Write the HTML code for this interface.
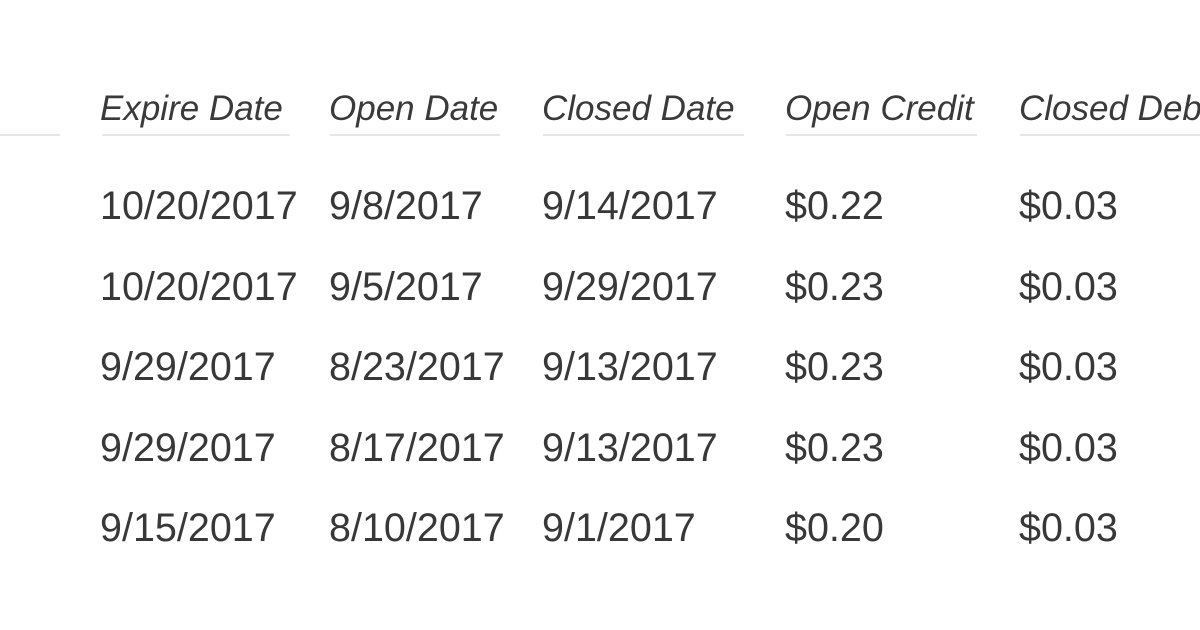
<!DOCTYPE html>
<html><head><style>
body{margin:0;width:1200px;height:630px;background:#fff;overflow:hidden;position:relative;font-family:"Liberation Sans",sans-serif;color:#353535}
.h{position:absolute;top:87px;font-style:italic;font-size:35px;line-height:44px;white-space:nowrap;color:#3a3a3a}
.u{position:absolute;top:134px;height:2px;background:#e6e6e6}
.d{position:absolute;font-size:39.5px;line-height:44px;white-space:nowrap;color:#383838}
</style></head><body>
<div class="u" style="left:0;width:60px"></div>
<div class="h" style="left:100px">Expire Date</div><div class="u" style="left:102px;width:188px"></div>
<div class="h" style="left:329px">Open Date</div><div class="u" style="left:330px;width:170px"></div>
<div class="h" style="left:542px">Closed Date</div><div class="u" style="left:543px;width:201px"></div>
<div class="h" style="left:785px">Open Credit</div><div class="u" style="left:786px;width:191px"></div>
<div class="h" style="left:1019px">Closed Debit</div><div class="u" style="left:1020px;width:180px"></div>

<div class="d" style="left:100px;top:184px">10/20/2017</div>
<div class="d" style="left:329px;top:184px">9/8/2017</div>
<div class="d" style="left:542px;top:184px">9/14/2017</div>
<div class="d" style="left:785px;top:184px">$0.22</div>
<div class="d" style="left:1019px;top:184px">$0.03</div>

<div class="d" style="left:100px;top:265px">10/20/2017</div>
<div class="d" style="left:329px;top:265px">9/5/2017</div>
<div class="d" style="left:542px;top:265px">9/29/2017</div>
<div class="d" style="left:785px;top:265px">$0.23</div>
<div class="d" style="left:1019px;top:265px">$0.03</div>

<div class="d" style="left:100px;top:345px">9/29/2017</div>
<div class="d" style="left:329px;top:345px">8/23/2017</div>
<div class="d" style="left:542px;top:345px">9/13/2017</div>
<div class="d" style="left:785px;top:345px">$0.23</div>
<div class="d" style="left:1019px;top:345px">$0.03</div>

<div class="d" style="left:100px;top:426px">9/29/2017</div>
<div class="d" style="left:329px;top:426px">8/17/2017</div>
<div class="d" style="left:542px;top:426px">9/13/2017</div>
<div class="d" style="left:785px;top:426px">$0.23</div>
<div class="d" style="left:1019px;top:426px">$0.03</div>

<div class="d" style="left:100px;top:506px">9/15/2017</div>
<div class="d" style="left:329px;top:506px">8/10/2017</div>
<div class="d" style="left:542px;top:506px">9/1/2017</div>
<div class="d" style="left:785px;top:506px">$0.20</div>
<div class="d" style="left:1019px;top:506px">$0.03</div>
</body></html>
